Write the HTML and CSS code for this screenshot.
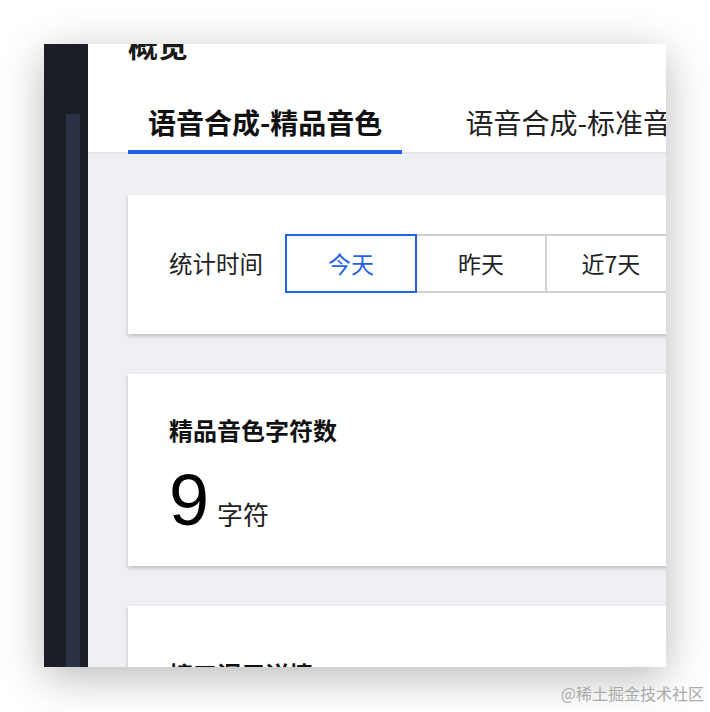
FILE: index.html
```html
<!DOCTYPE html>
<html lang="zh-CN">
<head>
<meta charset="UTF-8" />
<meta name="viewport" content="width=device-width, initial-scale=1" />
<title>概览</title>
<link rel="stylesheet" href="styles.css">
</head>
<body>

<div class="frame">
  <div class="window">
    <div class="sidebar">
      <div class="sidebar-strip"></div>
    </div>

    <div class="main">
      <div class="header">
        <div class="page-title">概览</div>
        <div class="tabs">
          <div class="tab active">语音合成-精品音色</div>
          <div class="tab">语音合成-标准音色</div>
        </div>
      </div>

      <div class="content">
        <div class="card filter-card">
          <span class="filter-label">统计时间</span>
          <div class="range-group">
            <button class="range-btn selected">今天</button>
            <button class="range-btn">昨天</button>
            <button class="range-btn">近7天</button>
            <button class="range-btn">近30天</button>
          </div>
        </div>

        <div class="card stat-card">
          <div class="card-title">精品音色字符数</div>
          <div class="stat-row">
            <span class="stat-value">9</span>
            <span class="stat-unit">字符</span>
          </div>
        </div>

        <div class="card detail-card">
          <div class="card-title">接口调用详情</div>
        </div>
      </div>
    </div>
  </div>
  <div class="watermark">@稀土掘金技术社区</div>
</div>

</body>
</html>
```

FILE: styles.css
```css
body {
  margin: 0;
  background: #fff;
  font-family: "Noto Sans CJK SC", "Noto Sans", sans-serif;
  color: #1a1a1a;
}
.frame {
  padding: 44px 44px 0;
  height: 712px;
  box-sizing: border-box;
  overflow: hidden;
}
.window {
  display: flex;
  width: 622px;
  height: 623px;
  overflow: hidden;
  box-shadow: 0 10px 40px rgba(0, 0, 0, 0.28);
}
.sidebar {
  width: 44px;
  flex-shrink: 0;
  background: #1b1e25;
  padding-top: 70px;
  box-sizing: border-box;
}
.sidebar-strip {
  width: 14px;
  height: 100%;
  margin-left: 22px;
  background: #2b3248;
}
.main {
  flex: 1;
  min-width: 0;
  background: #eef0f4;
  overflow: hidden;
}
.header {
  background: #fff;
  padding: 0 40px;
  border-bottom: 2px solid #e3e5ea;
  white-space: nowrap;
}
.page-title {
  font-size: 30px;
  font-weight: 700;
  line-height: 40px;
  margin-top: -20px;
}
.tabs {
  display: flex;
  gap: 43px;
  margin-top: 38px;
}
.tab {
  font-size: 28px;
  line-height: 40px;
  padding: 0 20px 8px;
  margin-bottom: -2px;
  border-bottom: 4px solid transparent;
  color: #222;
  flex-shrink: 0;
}
.tab.active {
  font-weight: 700;
  color: #111;
  border-bottom-color: #1f62e8;
}
.content {
  padding: 41px 0 0 40px;
}
.card {
  width: 760px;
  background: #fff;
  box-shadow: 0 2px 4px rgba(0, 0, 0, 0.22);
  margin-bottom: 40px;
  box-sizing: border-box;
}
.filter-card {
  display: flex;
  align-items: center;
  height: 139px;
  padding: 0 41px 3px;
}
.filter-label {
  font-size: 23.5px;
  color: #222;
  margin-right: 22px;
}
.range-group {
  display: flex;
}
.range-btn {
  width: 132px;
  height: 59px;
  font-family: inherit;
  font-size: 23px;
  color: #222;
  background: #fff;
  border: 2px solid #cfd2d8;
  margin-left: -2px;
  padding: 0;
}
.range-btn:first-child {
  margin-left: 0;
}
.range-btn.selected {
  color: #1f62e8;
  border-color: #1f62e8;
  position: relative;
  z-index: 1;
}
.stat-card {
  height: 192px;
  padding: 40px 41px 0;
}
.card-title {
  font-size: 24px;
  font-weight: 700;
  line-height: 32px;
  color: #111;
}
.stat-row {
  display: flex;
  align-items: baseline;
  margin-top: 18px;
}
.stat-value {
  font-family: "Liberation Sans", Arial, sans-serif;
  font-size: 72px;
  line-height: 72px;
  color: #000;
}
.stat-unit {
  font-size: 26px;
  color: #222;
  margin-left: 8px;
}
.detail-card {
  height: 200px;
  padding: 52px 41px 0;
}
.watermark {
  text-align: right;
  font-size: 16px;
  color: #aaa;
  margin-top: 14px;
  margin-right: -38px;
}
```
